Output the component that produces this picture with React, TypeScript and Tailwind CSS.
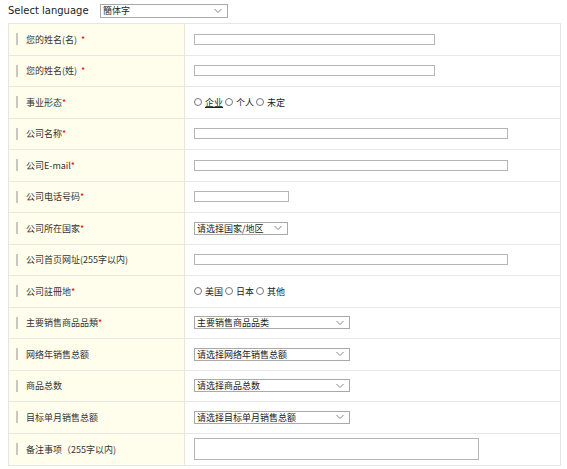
import React from "react";

const font = { fontFamily: '"Noto Sans CJK SC", "Noto Sans", sans-serif' };

function Chevron() {
  return (
    <svg width="8" height="5" viewBox="0 0 8 5" className="absolute right-[5px] top-1/2 -translate-y-1/2">
      <path d="M0.5 0.5 L4 4 L7.5 0.5" fill="none" stroke="#777" strokeWidth="0.9" />
    </svg>
  );
}

function Sel({ text, w, h = "h-[13px]" }: { text: string; w: string; h?: string }) {
  return (
    <div className={`relative shrink-0 border border-[#a9a9a9] bg-white flex items-center pl-[2px] text-[9px] text-[#222] ${w} ${h}`}>
      <span className="leading-none">{text}</span>
      <Chevron />
    </div>
  );
}

function Input({ w }: { w: string }) {
  return <div className={`h-[11px] border border-[#b5b5b5] bg-white ${w}`} />;
}

function Radio({ label, u }: { label: string; u?: boolean }) {
  return (
    <span className="inline-flex items-center mr-[2px]">
      <span className="w-[8px] h-[8px] rounded-full border border-[#777] bg-white mr-[3px]" />
      <span className={u ? "underline" : ""}>{label}</span>
    </span>
  );
}

type Row = { label: string; req?: boolean; sp?: boolean; field: React.ReactNode };

const rows: Row[] = [
  { label: "您的姓名(名)", req: true, sp: true, field: <Input w="w-[241px]" /> },
  { label: "您的姓名(姓)", req: true, sp: true, field: <Input w="w-[241px]" /> },
  {
    label: "事业形态",
    req: true,
    field: (
      <div className="flex items-center text-[9px] text-[#222]">
        <Radio label="企业" u />
        <Radio label="个人" />
        <Radio label="未定" />
      </div>
    ),
  },
  { label: "公司名称", req: true, field: <Input w="w-[314px]" /> },
  { label: "公司E-mail", req: true, field: <Input w="w-[314px]" /> },
  { label: "公司电话号码", req: true, field: <Input w="w-[95px]" /> },
  { label: "公司所在国家", req: true, field: <Sel text="请选择国家/地区" w="w-[94px]" /> },
  { label: "公司首页网址(255字以内)", field: <Input w="w-[314px]" /> },
  {
    label: "公司註冊地",
    req: true,
    field: (
      <div className="flex items-center text-[9px] text-[#222]">
        <Radio label="美国" />
        <Radio label="日本" />
        <Radio label="其他" />
      </div>
    ),
  },
  { label: "主要销售商品品類", req: true, field: <Sel text="主要销售商品品类" w="w-[156px]" /> },
  { label: "网络年销售总额", field: <Sel text="请选择网络年销售总额" w="w-[156px]" /> },
  { label: "商品总数", field: <Sel text="请选择商品总数" w="w-[156px]" /> },
  { label: "目标单月销售总额", field: <Sel text="请选择目标单月销售总额" w="w-[156px]" /> },
  {
    label: "备注事项（255字以内)",
    field: <div className="h-[22px] w-[285px] border border-[#b5b5b5] bg-white" />,
  },
];

export default function App() {
  return (
    <div className="w-[567px] h-[469px] bg-white text-[10px] text-[#333]" style={font}>
      <div className="flex items-center h-[20px] pl-[8px] pt-[1px]">
        <span
          className="w-[92px] shrink-0 text-[10px] text-[#222] whitespace-nowrap"
          style={{ fontFamily: '"DejaVu Sans", sans-serif' }}
        >
          Select language
        </span>
        <Sel text="簡体字" w="w-[128px]" h="h-[14px]" />
      </div>
      <div className="ml-[8px] mt-[3px] w-[553px] border border-[#e6e6e6]">
        {rows.map((r, i) => (
          <div
            key={i}
            className={`flex h-[31.5px] ${i < rows.length - 1 ? "border-b border-[#e8e8e4]" : ""}`}
          >
            <div className="w-[176px] shrink-0 bg-[#fffeec] border-r border-[#ebe8d0] flex items-center pl-[7px]">
              <span className="w-[2px] h-[12px] bg-[#d8d8d0] border-x border-[#c8c8c0] mr-[8px]" />
              <span className="text-[9px] text-[#333] whitespace-nowrap">
                {r.label}
                {r.req && <span className={`text-[#e00] ${r.sp ? "ml-[4px]" : ""}`}>*</span>}
              </span>
            </div>
            <div className="flex-1 flex items-center pl-[9px]">{r.field}</div>
          </div>
        ))}
      </div>
    </div>
  );
}
